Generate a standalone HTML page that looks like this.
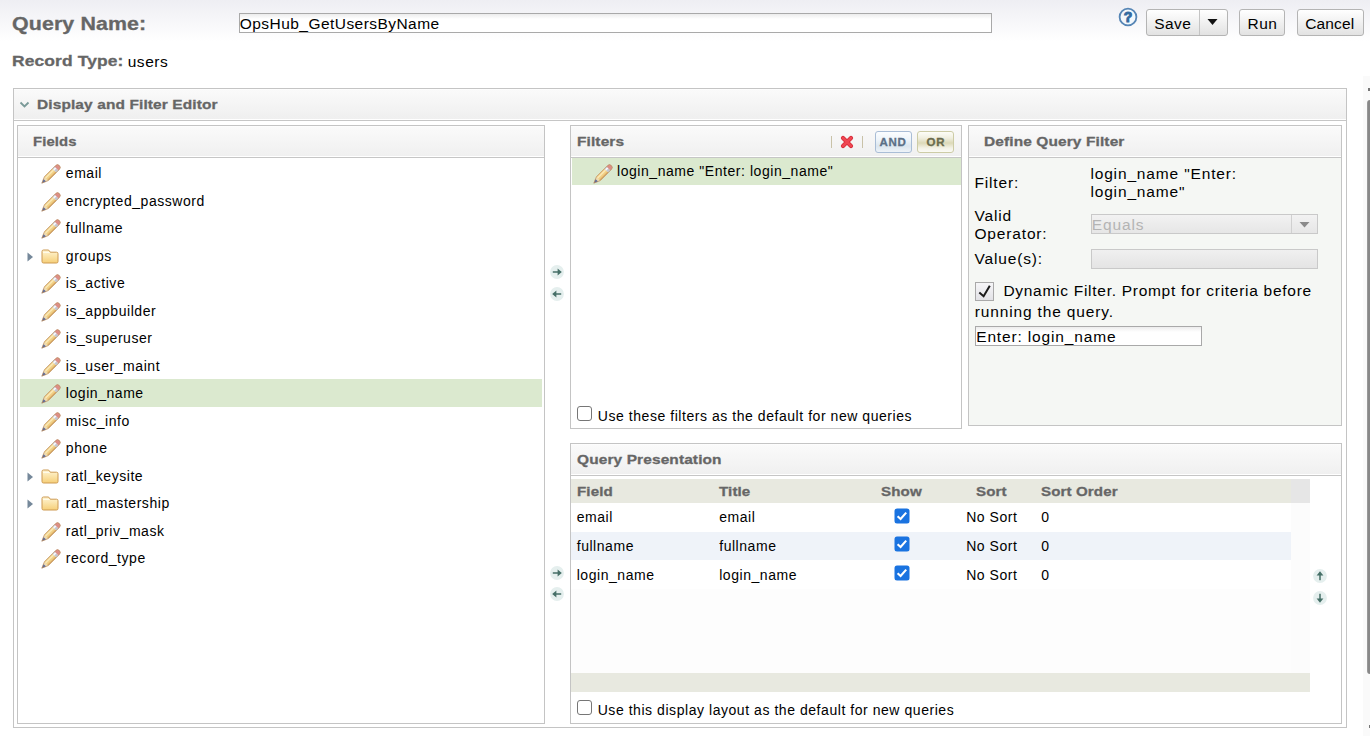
<!DOCTYPE html>
<html><head><meta charset="utf-8"><title>Query Editor</title>
<style>
html,body{margin:0;padding:0;width:1370px;height:736px;overflow:hidden;background:#fff;}
body{position:relative;font-family:"Liberation Sans",sans-serif;}
.t{position:absolute;white-space:nowrap;line-height:20px;font-family:"Liberation Sans",sans-serif;}
.b{position:absolute;display:block;}
</style></head><body>
<div class="b" style="left:0px;top:0px;width:1370px;height:41px;background:linear-gradient(#eeeef3,#ffffff);"></div>
<div class="t" style="left:12.00px;top:14.09px;font-size:18.5px;letter-spacing:0.1px;color:#666;font-weight:bold;-webkit-text-stroke:0.3px #666;transform:scaleX(1.155);transform-origin:0 0;">Query Name:</div>
<div class="b" style="left:239px;top:13px;width:753px;height:20px;border:1px solid #a9a9a9;box-sizing:border-box;background:linear-gradient(#ececec,#ffffff 5px);"></div>
<div class="t" style="left:239.80px;top:14.03px;font-size:15.5px;letter-spacing:0.45px;color:#000;">OpsHub_GetUsersByName</div>
<svg class="b" style="left:1118px;top:7px" width="20" height="20" viewBox="0 0 20 20"><circle cx="10" cy="10" r="8.4" fill="#f2f7fc" stroke="#5585b5" stroke-width="1.8"/><text x="10" y="15" text-anchor="middle" font-family="Liberation Sans" font-weight="bold" font-size="14" fill="#346aa0" stroke="#346aa0" stroke-width="1">?</text></svg>
<div class="b" style="left:1146px;top:9px;width:82px;height:27px;border:1px solid #b4b4b4;box-sizing:border-box;border-radius:3px;background:linear-gradient(#ffffff,#e2e2e2);"></div>
<div class="b" style="left:1199px;top:10px;width:1px;height:25px;background:#c4c4c4;"></div>
<div class="t" style="left:1154.20px;top:14.03px;font-size:15.5px;letter-spacing:0.43px;color:#000;">Save</div>
<svg class="b" style="left:1207px;top:18px" width="11" height="8" viewBox="0 0 11 8"><path d="M0.5 1 H10.5 L5.5 7 Z" fill="#111"/></svg>
<div class="b" style="left:1239px;top:9px;width:46px;height:27px;border:1px solid #b4b4b4;box-sizing:border-box;border-radius:3px;background:linear-gradient(#ffffff,#e2e2e2);"></div>
<div class="t" style="left:1247.60px;top:14.03px;font-size:15.5px;letter-spacing:0.39px;color:#000;">Run</div>
<div class="b" style="left:1297px;top:9px;width:67px;height:27px;border:1px solid #b4b4b4;box-sizing:border-box;border-radius:3px;background:linear-gradient(#ffffff,#e2e2e2);"></div>
<div class="t" style="left:1305.20px;top:14.03px;font-size:15.5px;letter-spacing:0.14px;color:#000;">Cancel</div>
<div class="t" style="left:12.00px;top:51.33px;font-size:15.5px;letter-spacing:0.1px;color:#666;font-weight:bold;-webkit-text-stroke:0.3px #666;transform:scaleX(1.125);transform-origin:0 0;">Record Type:</div>
<div class="t" style="left:127.70px;top:51.63px;font-size:15.5px;letter-spacing:0.56px;color:#000;">users</div>
<div class="b" style="left:13px;top:88px;width:1334px;height:640px;border:1px solid #c4c4c4;box-sizing:border-box;"></div>
<div class="b" style="left:14px;top:89px;width:1332px;height:31px;background:linear-gradient(#ffffff 0px,#fafafa 1px,#efefef 30px,#ffffff 30px);"></div>
<div class="b" style="left:14px;top:120px;width:1332px;height:1px;background:#c6c6c6;"></div>
<svg class="b" style="left:19px;top:101px" width="11" height="8" viewBox="0 0 11 8"><path d="M1.5 1.5 L5.5 5.5 L9.5 1.5" stroke="#7a9a98" stroke-width="1.8" fill="none"/></svg>
<div class="t" style="left:36.90px;top:94.92px;font-size:13.5px;letter-spacing:0.1px;color:#666;font-weight:bold;-webkit-text-stroke:0.3px #666;transform:scaleX(1.145);transform-origin:0 0;">Display and Filter Editor</div>
<div class="b" style="left:17px;top:125px;width:528px;height:599px;border:1px solid #c4c4c4;box-sizing:border-box;"></div>
<div class="b" style="left:18px;top:126px;width:526px;height:31px;background:linear-gradient(#ffffff 0px,#fafafa 1px,#f0f0f0 30px,#ffffff 30px);"></div>
<div class="b" style="left:18px;top:157px;width:526px;height:1px;background:#c6c6c6;"></div>
<div class="t" style="left:32.50px;top:131.82px;font-size:13.5px;letter-spacing:0.1px;color:#666;font-weight:bold;-webkit-text-stroke:0.3px #666;transform:scaleX(1.1);transform-origin:0 0;">Fields</div>
<svg class="b" style="left:40px;top:164px;overflow:visible" width="20" height="20" viewBox="0 0 20 20"><g transform="rotate(-45 10.5 10.5)"><path d="M-1.8 10.5 L4.6 7.8 H16 V13.2 H4.6 Z" fill="#eedcb2"/><path d="M-1.9 10.5 L2.4 8.7 V12.3 Z" fill="#5a6b9e"/><rect x="4.6" y="7.8" width="11.4" height="5.4" fill="#f1cf84"/><rect x="4.6" y="8.7" width="11.4" height="1.5" fill="#fae8b6"/><rect x="4.6" y="12" width="11.4" height="1.2" fill="#d9a862"/><rect x="16" y="7.8" width="3" height="5.4" fill="#c3c7d1"/><rect x="16" y="8.6" width="3" height="1.8" fill="#f7f8fc"/><path d="M19 7.8 H20.6 Q23.1 7.8 23.1 10.5 Q23.1 13.2 20.6 13.2 H19 Z" fill="#dc8e86"/><path d="M-1.8 10.5 L4.6 7.8 H20.6 Q23.1 7.8 23.1 10.5 Q23.1 13.2 20.6 13.2 H4.6 Z" fill="none" stroke="#b98b5c" stroke-width="0.75" stroke-opacity="0.9" stroke-linejoin="round"/></g></svg>
<div class="t" style="left:65.80px;top:163.05px;font-size:14px;letter-spacing:0.55px;color:#000;">email</div>
<svg class="b" style="left:40px;top:192px;overflow:visible" width="20" height="20" viewBox="0 0 20 20"><g transform="rotate(-45 10.5 10.5)"><path d="M-1.8 10.5 L4.6 7.8 H16 V13.2 H4.6 Z" fill="#eedcb2"/><path d="M-1.9 10.5 L2.4 8.7 V12.3 Z" fill="#5a6b9e"/><rect x="4.6" y="7.8" width="11.4" height="5.4" fill="#f1cf84"/><rect x="4.6" y="8.7" width="11.4" height="1.5" fill="#fae8b6"/><rect x="4.6" y="12" width="11.4" height="1.2" fill="#d9a862"/><rect x="16" y="7.8" width="3" height="5.4" fill="#c3c7d1"/><rect x="16" y="8.6" width="3" height="1.8" fill="#f7f8fc"/><path d="M19 7.8 H20.6 Q23.1 7.8 23.1 10.5 Q23.1 13.2 20.6 13.2 H19 Z" fill="#dc8e86"/><path d="M-1.8 10.5 L4.6 7.8 H20.6 Q23.1 7.8 23.1 10.5 Q23.1 13.2 20.6 13.2 H4.6 Z" fill="none" stroke="#b98b5c" stroke-width="0.75" stroke-opacity="0.9" stroke-linejoin="round"/></g></svg>
<div class="t" style="left:65.80px;top:190.55px;font-size:14px;letter-spacing:0.55px;color:#000;">encrypted_password</div>
<svg class="b" style="left:40px;top:219px;overflow:visible" width="20" height="20" viewBox="0 0 20 20"><g transform="rotate(-45 10.5 10.5)"><path d="M-1.8 10.5 L4.6 7.8 H16 V13.2 H4.6 Z" fill="#eedcb2"/><path d="M-1.9 10.5 L2.4 8.7 V12.3 Z" fill="#5a6b9e"/><rect x="4.6" y="7.8" width="11.4" height="5.4" fill="#f1cf84"/><rect x="4.6" y="8.7" width="11.4" height="1.5" fill="#fae8b6"/><rect x="4.6" y="12" width="11.4" height="1.2" fill="#d9a862"/><rect x="16" y="7.8" width="3" height="5.4" fill="#c3c7d1"/><rect x="16" y="8.6" width="3" height="1.8" fill="#f7f8fc"/><path d="M19 7.8 H20.6 Q23.1 7.8 23.1 10.5 Q23.1 13.2 20.6 13.2 H19 Z" fill="#dc8e86"/><path d="M-1.8 10.5 L4.6 7.8 H20.6 Q23.1 7.8 23.1 10.5 Q23.1 13.2 20.6 13.2 H4.6 Z" fill="none" stroke="#b98b5c" stroke-width="0.75" stroke-opacity="0.9" stroke-linejoin="round"/></g></svg>
<div class="t" style="left:65.80px;top:218.05px;font-size:14px;letter-spacing:0.55px;color:#000;">fullname</div>
<svg class="b" style="left:27px;top:252px" width="7" height="10" viewBox="0 0 7 10"><path d="M0.5 0.5 L6 5 L0.5 9.5 Z" fill="#75889a"/></svg>
<svg class="b" style="left:41px;top:249px" width="18" height="15" viewBox="0 0 18 15"><defs><linearGradient id="fg" x1="0" y1="0" x2="0" y2="1"><stop offset="0" stop-color="#fff6d6"/><stop offset="1" stop-color="#f6cf78"/></linearGradient></defs><path d="M1 2.5 Q1 1 2.5 1 H7 Q8 1 8.5 2 L9.2 3.2 H15.5 Q17 3.2 17 4.7 V12.5 Q17 14 15.5 14 H2.5 Q1 14 1 12.5 Z" fill="url(#fg)" stroke="#cd9a52" stroke-width="1"/><path d="M2 3.5 H8.6" stroke="#fffbea" stroke-width="1"/></svg>
<div class="t" style="left:65.80px;top:245.55px;font-size:14px;letter-spacing:0.55px;color:#000;">groups</div>
<svg class="b" style="left:40px;top:274px;overflow:visible" width="20" height="20" viewBox="0 0 20 20"><g transform="rotate(-45 10.5 10.5)"><path d="M-1.8 10.5 L4.6 7.8 H16 V13.2 H4.6 Z" fill="#eedcb2"/><path d="M-1.9 10.5 L2.4 8.7 V12.3 Z" fill="#5a6b9e"/><rect x="4.6" y="7.8" width="11.4" height="5.4" fill="#f1cf84"/><rect x="4.6" y="8.7" width="11.4" height="1.5" fill="#fae8b6"/><rect x="4.6" y="12" width="11.4" height="1.2" fill="#d9a862"/><rect x="16" y="7.8" width="3" height="5.4" fill="#c3c7d1"/><rect x="16" y="8.6" width="3" height="1.8" fill="#f7f8fc"/><path d="M19 7.8 H20.6 Q23.1 7.8 23.1 10.5 Q23.1 13.2 20.6 13.2 H19 Z" fill="#dc8e86"/><path d="M-1.8 10.5 L4.6 7.8 H20.6 Q23.1 7.8 23.1 10.5 Q23.1 13.2 20.6 13.2 H4.6 Z" fill="none" stroke="#b98b5c" stroke-width="0.75" stroke-opacity="0.9" stroke-linejoin="round"/></g></svg>
<div class="t" style="left:65.80px;top:273.05px;font-size:14px;letter-spacing:0.55px;color:#000;">is_active</div>
<svg class="b" style="left:40px;top:302px;overflow:visible" width="20" height="20" viewBox="0 0 20 20"><g transform="rotate(-45 10.5 10.5)"><path d="M-1.8 10.5 L4.6 7.8 H16 V13.2 H4.6 Z" fill="#eedcb2"/><path d="M-1.9 10.5 L2.4 8.7 V12.3 Z" fill="#5a6b9e"/><rect x="4.6" y="7.8" width="11.4" height="5.4" fill="#f1cf84"/><rect x="4.6" y="8.7" width="11.4" height="1.5" fill="#fae8b6"/><rect x="4.6" y="12" width="11.4" height="1.2" fill="#d9a862"/><rect x="16" y="7.8" width="3" height="5.4" fill="#c3c7d1"/><rect x="16" y="8.6" width="3" height="1.8" fill="#f7f8fc"/><path d="M19 7.8 H20.6 Q23.1 7.8 23.1 10.5 Q23.1 13.2 20.6 13.2 H19 Z" fill="#dc8e86"/><path d="M-1.8 10.5 L4.6 7.8 H20.6 Q23.1 7.8 23.1 10.5 Q23.1 13.2 20.6 13.2 H4.6 Z" fill="none" stroke="#b98b5c" stroke-width="0.75" stroke-opacity="0.9" stroke-linejoin="round"/></g></svg>
<div class="t" style="left:65.80px;top:300.55px;font-size:14px;letter-spacing:0.55px;color:#000;">is_appbuilder</div>
<svg class="b" style="left:40px;top:329px;overflow:visible" width="20" height="20" viewBox="0 0 20 20"><g transform="rotate(-45 10.5 10.5)"><path d="M-1.8 10.5 L4.6 7.8 H16 V13.2 H4.6 Z" fill="#eedcb2"/><path d="M-1.9 10.5 L2.4 8.7 V12.3 Z" fill="#5a6b9e"/><rect x="4.6" y="7.8" width="11.4" height="5.4" fill="#f1cf84"/><rect x="4.6" y="8.7" width="11.4" height="1.5" fill="#fae8b6"/><rect x="4.6" y="12" width="11.4" height="1.2" fill="#d9a862"/><rect x="16" y="7.8" width="3" height="5.4" fill="#c3c7d1"/><rect x="16" y="8.6" width="3" height="1.8" fill="#f7f8fc"/><path d="M19 7.8 H20.6 Q23.1 7.8 23.1 10.5 Q23.1 13.2 20.6 13.2 H19 Z" fill="#dc8e86"/><path d="M-1.8 10.5 L4.6 7.8 H20.6 Q23.1 7.8 23.1 10.5 Q23.1 13.2 20.6 13.2 H4.6 Z" fill="none" stroke="#b98b5c" stroke-width="0.75" stroke-opacity="0.9" stroke-linejoin="round"/></g></svg>
<div class="t" style="left:65.80px;top:328.05px;font-size:14px;letter-spacing:0.55px;color:#000;">is_superuser</div>
<svg class="b" style="left:40px;top:357px;overflow:visible" width="20" height="20" viewBox="0 0 20 20"><g transform="rotate(-45 10.5 10.5)"><path d="M-1.8 10.5 L4.6 7.8 H16 V13.2 H4.6 Z" fill="#eedcb2"/><path d="M-1.9 10.5 L2.4 8.7 V12.3 Z" fill="#5a6b9e"/><rect x="4.6" y="7.8" width="11.4" height="5.4" fill="#f1cf84"/><rect x="4.6" y="8.7" width="11.4" height="1.5" fill="#fae8b6"/><rect x="4.6" y="12" width="11.4" height="1.2" fill="#d9a862"/><rect x="16" y="7.8" width="3" height="5.4" fill="#c3c7d1"/><rect x="16" y="8.6" width="3" height="1.8" fill="#f7f8fc"/><path d="M19 7.8 H20.6 Q23.1 7.8 23.1 10.5 Q23.1 13.2 20.6 13.2 H19 Z" fill="#dc8e86"/><path d="M-1.8 10.5 L4.6 7.8 H20.6 Q23.1 7.8 23.1 10.5 Q23.1 13.2 20.6 13.2 H4.6 Z" fill="none" stroke="#b98b5c" stroke-width="0.75" stroke-opacity="0.9" stroke-linejoin="round"/></g></svg>
<div class="t" style="left:65.80px;top:355.55px;font-size:14px;letter-spacing:0.55px;color:#000;">is_user_maint</div>
<div class="b" style="left:20px;top:379px;width:522px;height:28px;background:#dbe9cf;"></div>
<svg class="b" style="left:40px;top:384px;overflow:visible" width="20" height="20" viewBox="0 0 20 20"><g transform="rotate(-45 10.5 10.5)"><path d="M-1.8 10.5 L4.6 7.8 H16 V13.2 H4.6 Z" fill="#eedcb2"/><path d="M-1.9 10.5 L2.4 8.7 V12.3 Z" fill="#5a6b9e"/><rect x="4.6" y="7.8" width="11.4" height="5.4" fill="#f1cf84"/><rect x="4.6" y="8.7" width="11.4" height="1.5" fill="#fae8b6"/><rect x="4.6" y="12" width="11.4" height="1.2" fill="#d9a862"/><rect x="16" y="7.8" width="3" height="5.4" fill="#c3c7d1"/><rect x="16" y="8.6" width="3" height="1.8" fill="#f7f8fc"/><path d="M19 7.8 H20.6 Q23.1 7.8 23.1 10.5 Q23.1 13.2 20.6 13.2 H19 Z" fill="#dc8e86"/><path d="M-1.8 10.5 L4.6 7.8 H20.6 Q23.1 7.8 23.1 10.5 Q23.1 13.2 20.6 13.2 H4.6 Z" fill="none" stroke="#b98b5c" stroke-width="0.75" stroke-opacity="0.9" stroke-linejoin="round"/></g></svg>
<div class="t" style="left:65.80px;top:383.05px;font-size:14px;letter-spacing:0.55px;color:#000;">login_name</div>
<svg class="b" style="left:40px;top:412px;overflow:visible" width="20" height="20" viewBox="0 0 20 20"><g transform="rotate(-45 10.5 10.5)"><path d="M-1.8 10.5 L4.6 7.8 H16 V13.2 H4.6 Z" fill="#eedcb2"/><path d="M-1.9 10.5 L2.4 8.7 V12.3 Z" fill="#5a6b9e"/><rect x="4.6" y="7.8" width="11.4" height="5.4" fill="#f1cf84"/><rect x="4.6" y="8.7" width="11.4" height="1.5" fill="#fae8b6"/><rect x="4.6" y="12" width="11.4" height="1.2" fill="#d9a862"/><rect x="16" y="7.8" width="3" height="5.4" fill="#c3c7d1"/><rect x="16" y="8.6" width="3" height="1.8" fill="#f7f8fc"/><path d="M19 7.8 H20.6 Q23.1 7.8 23.1 10.5 Q23.1 13.2 20.6 13.2 H19 Z" fill="#dc8e86"/><path d="M-1.8 10.5 L4.6 7.8 H20.6 Q23.1 7.8 23.1 10.5 Q23.1 13.2 20.6 13.2 H4.6 Z" fill="none" stroke="#b98b5c" stroke-width="0.75" stroke-opacity="0.9" stroke-linejoin="round"/></g></svg>
<div class="t" style="left:65.80px;top:410.55px;font-size:14px;letter-spacing:0.55px;color:#000;">misc_info</div>
<svg class="b" style="left:40px;top:439px;overflow:visible" width="20" height="20" viewBox="0 0 20 20"><g transform="rotate(-45 10.5 10.5)"><path d="M-1.8 10.5 L4.6 7.8 H16 V13.2 H4.6 Z" fill="#eedcb2"/><path d="M-1.9 10.5 L2.4 8.7 V12.3 Z" fill="#5a6b9e"/><rect x="4.6" y="7.8" width="11.4" height="5.4" fill="#f1cf84"/><rect x="4.6" y="8.7" width="11.4" height="1.5" fill="#fae8b6"/><rect x="4.6" y="12" width="11.4" height="1.2" fill="#d9a862"/><rect x="16" y="7.8" width="3" height="5.4" fill="#c3c7d1"/><rect x="16" y="8.6" width="3" height="1.8" fill="#f7f8fc"/><path d="M19 7.8 H20.6 Q23.1 7.8 23.1 10.5 Q23.1 13.2 20.6 13.2 H19 Z" fill="#dc8e86"/><path d="M-1.8 10.5 L4.6 7.8 H20.6 Q23.1 7.8 23.1 10.5 Q23.1 13.2 20.6 13.2 H4.6 Z" fill="none" stroke="#b98b5c" stroke-width="0.75" stroke-opacity="0.9" stroke-linejoin="round"/></g></svg>
<div class="t" style="left:65.80px;top:438.05px;font-size:14px;letter-spacing:0.55px;color:#000;">phone</div>
<svg class="b" style="left:27px;top:472px" width="7" height="10" viewBox="0 0 7 10"><path d="M0.5 0.5 L6 5 L0.5 9.5 Z" fill="#75889a"/></svg>
<svg class="b" style="left:41px;top:469px" width="18" height="15" viewBox="0 0 18 15"><defs><linearGradient id="fg" x1="0" y1="0" x2="0" y2="1"><stop offset="0" stop-color="#fff6d6"/><stop offset="1" stop-color="#f6cf78"/></linearGradient></defs><path d="M1 2.5 Q1 1 2.5 1 H7 Q8 1 8.5 2 L9.2 3.2 H15.5 Q17 3.2 17 4.7 V12.5 Q17 14 15.5 14 H2.5 Q1 14 1 12.5 Z" fill="url(#fg)" stroke="#cd9a52" stroke-width="1"/><path d="M2 3.5 H8.6" stroke="#fffbea" stroke-width="1"/></svg>
<div class="t" style="left:65.80px;top:465.55px;font-size:14px;letter-spacing:0.55px;color:#000;">ratl_keysite</div>
<svg class="b" style="left:27px;top:499px" width="7" height="10" viewBox="0 0 7 10"><path d="M0.5 0.5 L6 5 L0.5 9.5 Z" fill="#75889a"/></svg>
<svg class="b" style="left:41px;top:496px" width="18" height="15" viewBox="0 0 18 15"><defs><linearGradient id="fg" x1="0" y1="0" x2="0" y2="1"><stop offset="0" stop-color="#fff6d6"/><stop offset="1" stop-color="#f6cf78"/></linearGradient></defs><path d="M1 2.5 Q1 1 2.5 1 H7 Q8 1 8.5 2 L9.2 3.2 H15.5 Q17 3.2 17 4.7 V12.5 Q17 14 15.5 14 H2.5 Q1 14 1 12.5 Z" fill="url(#fg)" stroke="#cd9a52" stroke-width="1"/><path d="M2 3.5 H8.6" stroke="#fffbea" stroke-width="1"/></svg>
<div class="t" style="left:65.80px;top:493.05px;font-size:14px;letter-spacing:0.55px;color:#000;">ratl_mastership</div>
<svg class="b" style="left:40px;top:522px;overflow:visible" width="20" height="20" viewBox="0 0 20 20"><g transform="rotate(-45 10.5 10.5)"><path d="M-1.8 10.5 L4.6 7.8 H16 V13.2 H4.6 Z" fill="#eedcb2"/><path d="M-1.9 10.5 L2.4 8.7 V12.3 Z" fill="#5a6b9e"/><rect x="4.6" y="7.8" width="11.4" height="5.4" fill="#f1cf84"/><rect x="4.6" y="8.7" width="11.4" height="1.5" fill="#fae8b6"/><rect x="4.6" y="12" width="11.4" height="1.2" fill="#d9a862"/><rect x="16" y="7.8" width="3" height="5.4" fill="#c3c7d1"/><rect x="16" y="8.6" width="3" height="1.8" fill="#f7f8fc"/><path d="M19 7.8 H20.6 Q23.1 7.8 23.1 10.5 Q23.1 13.2 20.6 13.2 H19 Z" fill="#dc8e86"/><path d="M-1.8 10.5 L4.6 7.8 H20.6 Q23.1 7.8 23.1 10.5 Q23.1 13.2 20.6 13.2 H4.6 Z" fill="none" stroke="#b98b5c" stroke-width="0.75" stroke-opacity="0.9" stroke-linejoin="round"/></g></svg>
<div class="t" style="left:65.80px;top:520.55px;font-size:14px;letter-spacing:0.55px;color:#000;">ratl_priv_mask</div>
<svg class="b" style="left:40px;top:549px;overflow:visible" width="20" height="20" viewBox="0 0 20 20"><g transform="rotate(-45 10.5 10.5)"><path d="M-1.8 10.5 L4.6 7.8 H16 V13.2 H4.6 Z" fill="#eedcb2"/><path d="M-1.9 10.5 L2.4 8.7 V12.3 Z" fill="#5a6b9e"/><rect x="4.6" y="7.8" width="11.4" height="5.4" fill="#f1cf84"/><rect x="4.6" y="8.7" width="11.4" height="1.5" fill="#fae8b6"/><rect x="4.6" y="12" width="11.4" height="1.2" fill="#d9a862"/><rect x="16" y="7.8" width="3" height="5.4" fill="#c3c7d1"/><rect x="16" y="8.6" width="3" height="1.8" fill="#f7f8fc"/><path d="M19 7.8 H20.6 Q23.1 7.8 23.1 10.5 Q23.1 13.2 20.6 13.2 H19 Z" fill="#dc8e86"/><path d="M-1.8 10.5 L4.6 7.8 H20.6 Q23.1 7.8 23.1 10.5 Q23.1 13.2 20.6 13.2 H4.6 Z" fill="none" stroke="#b98b5c" stroke-width="0.75" stroke-opacity="0.9" stroke-linejoin="round"/></g></svg>
<div class="t" style="left:65.80px;top:548.05px;font-size:14px;letter-spacing:0.55px;color:#000;">record_type</div>
<svg class="b" style="left:550px;top:265px" width="14" height="14" viewBox="0 0 14 14"><circle cx="7" cy="7" r="6.9" fill="#e5efee"/><g transform="rotate(0 7 7)"><rect x="2.8" y="6.25" width="5.6" height="1.5" fill="#456f67"/><path d="M7.6 3.6 L11.8 7 L7.6 10.4 Z" fill="#456f67"/></g></svg>
<svg class="b" style="left:550px;top:287px" width="14" height="14" viewBox="0 0 14 14"><circle cx="7" cy="7" r="6.9" fill="#e5efee"/><g transform="rotate(180 7 7)"><rect x="2.8" y="6.25" width="5.6" height="1.5" fill="#456f67"/><path d="M7.6 3.6 L11.8 7 L7.6 10.4 Z" fill="#456f67"/></g></svg>
<svg class="b" style="left:550px;top:566px" width="14" height="14" viewBox="0 0 14 14"><circle cx="7" cy="7" r="6.9" fill="#e5efee"/><g transform="rotate(0 7 7)"><rect x="2.8" y="6.25" width="5.6" height="1.5" fill="#456f67"/><path d="M7.6 3.6 L11.8 7 L7.6 10.4 Z" fill="#456f67"/></g></svg>
<svg class="b" style="left:550px;top:587px" width="14" height="14" viewBox="0 0 14 14"><circle cx="7" cy="7" r="6.9" fill="#e5efee"/><g transform="rotate(180 7 7)"><rect x="2.8" y="6.25" width="5.6" height="1.5" fill="#456f67"/><path d="M7.6 3.6 L11.8 7 L7.6 10.4 Z" fill="#456f67"/></g></svg>
<div class="b" style="left:570px;top:125px;width:392px;height:304px;border:1px solid #c4c4c4;box-sizing:border-box;"></div>
<div class="b" style="left:571px;top:126px;width:390px;height:31px;background:linear-gradient(#ffffff 0px,#fafafa 1px,#f0f0f0 30px,#ffffff 30px);"></div>
<div class="b" style="left:571px;top:157px;width:390px;height:1px;background:#c6c6c6;"></div>
<div class="t" style="left:576.90px;top:131.82px;font-size:13.5px;letter-spacing:0.1px;color:#666;font-weight:bold;-webkit-text-stroke:0.3px #666;transform:scaleX(1.145);transform-origin:0 0;">Filters</div>
<div class="b" style="left:831px;top:136px;width:1px;height:12px;background:#c9c2a8;"></div>
<div class="b" style="left:862px;top:136px;width:1px;height:12px;background:#c9c2a8;"></div>
<svg class="b" style="left:840px;top:135px" width="14" height="14" viewBox="0 0 14 14"><path d="M3 3 L11 11 M11 3 L3 11" stroke="#d42a36" stroke-width="4.2" stroke-linecap="round"/><path d="M3 3 L11 11 M11 3 L3 11" stroke="#ef4652" stroke-width="2.6" stroke-linecap="round"/></svg>
<div class="b" style="left:875px;top:131px;width:37px;height:22px;border:1px solid #a9bdd6;box-sizing:border-box;border-radius:3px;background:linear-gradient(#fbfdff,#eef4f9 40%,#dbe6ef 70%,#eef3f8);"></div>
<div class="t" style="left:879.50px;top:132.32px;font-size:11.5px;letter-spacing:0.7px;color:#5b6f86;font-weight:bold;-webkit-text-stroke:0.3px #5b6f86;">AND</div>
<div class="b" style="left:917px;top:131px;width:37px;height:22px;border:1px solid #cdcca6;box-sizing:border-box;border-radius:3px;background:linear-gradient(#fdfdf8,#f0efe0 30%,#dcd9b8 55%,#f3f2e6 80%,#fbfbf6);"></div>
<div class="t" style="left:926.40px;top:132.32px;font-size:11.5px;letter-spacing:1.0px;color:#6a6b4c;font-weight:bold;-webkit-text-stroke:0.3px #6a6b4c;">OR</div>
<div class="b" style="left:572px;top:158px;width:389px;height:27px;background:#dbe9cf;"></div>
<svg class="b" style="left:592px;top:164px;overflow:visible" width="20" height="20" viewBox="0 0 20 20"><g transform="rotate(-45 10.5 10.5)"><path d="M-1.8 10.5 L4.6 7.8 H16 V13.2 H4.6 Z" fill="#eedcb2"/><path d="M-1.9 10.5 L2.4 8.7 V12.3 Z" fill="#5a6b9e"/><rect x="4.6" y="7.8" width="11.4" height="5.4" fill="#f1cf84"/><rect x="4.6" y="8.7" width="11.4" height="1.5" fill="#fae8b6"/><rect x="4.6" y="12" width="11.4" height="1.2" fill="#d9a862"/><rect x="16" y="7.8" width="3" height="5.4" fill="#c3c7d1"/><rect x="16" y="8.6" width="3" height="1.8" fill="#f7f8fc"/><path d="M19 7.8 H20.6 Q23.1 7.8 23.1 10.5 Q23.1 13.2 20.6 13.2 H19 Z" fill="#dc8e86"/><path d="M-1.8 10.5 L4.6 7.8 H20.6 Q23.1 7.8 23.1 10.5 Q23.1 13.2 20.6 13.2 H4.6 Z" fill="none" stroke="#b98b5c" stroke-width="0.75" stroke-opacity="0.9" stroke-linejoin="round"/></g></svg>
<div class="t" style="left:617.00px;top:161.35px;font-size:14px;letter-spacing:0.55px;color:#000;">login_name "Enter: login_name"</div>
<div class="b" style="left:577px;top:406px;width:15px;height:15px;border:1.3px solid #767676;box-sizing:border-box;border-radius:3px;background:#fff;"></div>
<div class="t" style="left:597.80px;top:405.75px;font-size:14px;letter-spacing:0.55px;color:#000;">Use these filters as the default for new queries</div>
<div class="b" style="left:968px;top:125px;width:374px;height:301px;border:1px solid #c4c4c4;box-sizing:border-box;"></div>
<div class="b" style="left:969px;top:158px;width:372px;height:267px;background:#f5f7f4;"></div>
<div class="b" style="left:969px;top:126px;width:372px;height:31px;background:linear-gradient(#ffffff 0px,#fafafa 1px,#f0f0f0 30px,#ffffff 30px);"></div>
<div class="b" style="left:969px;top:157px;width:372px;height:1px;background:#c6c6c6;"></div>
<div class="t" style="left:983.50px;top:131.82px;font-size:13.5px;letter-spacing:0.1px;color:#666;font-weight:bold;-webkit-text-stroke:0.3px #666;transform:scaleX(1.145);transform-origin:0 0;">Define Query Filter</div>
<div class="t" style="left:974.40px;top:172.63px;font-size:15.5px;letter-spacing:0.85px;color:#000;">Filter:</div>
<div class="t" style="left:1090.40px;top:163.63px;font-size:15.5px;letter-spacing:0.85px;color:#000;">login_name "Enter:</div>
<div class="t" style="left:1090.40px;top:181.63px;font-size:15.5px;letter-spacing:0.85px;color:#000;">login_name"</div>
<div class="t" style="left:974.40px;top:205.53px;font-size:15.5px;letter-spacing:0.85px;color:#000;">Valid</div>
<div class="t" style="left:974.40px;top:223.63px;font-size:15.5px;letter-spacing:0.85px;color:#000;">Operator:</div>
<div class="b" style="left:1091px;top:214px;width:227px;height:20px;border:1px solid #c9c9c9;box-sizing:border-box;background:linear-gradient(#f2f2f2,#e6e6e6);"></div>
<div class="b" style="left:1291px;top:215px;width:1px;height:18px;background:#d0d0d0;"></div>
<svg class="b" style="left:1299px;top:221px" width="11" height="8" viewBox="0 0 11 8"><path d="M0.5 1 H10.5 L5.5 6.5 Z" fill="#8a8a8a"/></svg>
<div class="t" style="left:1091.80px;top:214.63px;font-size:15.5px;letter-spacing:0.85px;color:#b4b4b4;">Equals</div>
<div class="t" style="left:974.40px;top:248.63px;font-size:15.5px;letter-spacing:0.85px;color:#000;">Value(s):</div>
<div class="b" style="left:1091px;top:249px;width:227px;height:20px;border:1px solid #c9c9c9;box-sizing:border-box;background:linear-gradient(#f0f0f0,#e4e4e4);"></div>
<div class="b" style="left:975px;top:282px;width:19px;height:19px;border:1px solid #a9a9a9;box-sizing:border-box;background:linear-gradient(#f6f6f8,#e2e2e6);"></div>
<svg class="b" style="left:975px;top:282px" width="19" height="19" viewBox="0 0 19 19"><path d="M4.3 10.6 L8.6 14.2 L14.8 3.8" stroke="#1a1a1a" stroke-width="2" fill="none"/></svg>
<div class="t" style="left:1003.40px;top:280.63px;font-size:15.5px;letter-spacing:0.72px;color:#000;">Dynamic Filter. Prompt for criteria before</div>
<div class="t" style="left:974.80px;top:302.03px;font-size:15.5px;letter-spacing:0.85px;color:#000;">running the query.</div>
<div class="b" style="left:975px;top:326px;width:227px;height:20px;border:1px solid #a9a9a9;box-sizing:border-box;background:linear-gradient(#ececec,#ffffff 5px);"></div>
<div class="t" style="left:976.20px;top:326.63px;font-size:15.5px;letter-spacing:0.85px;color:#000;">Enter: login_name</div>
<div class="b" style="left:570px;top:443px;width:772px;height:281px;border:1px solid #c4c4c4;box-sizing:border-box;"></div>
<div class="b" style="left:571px;top:444px;width:770px;height:31px;background:linear-gradient(#ffffff 0px,#fafafa 1px,#f0f0f0 30px,#ffffff 30px);"></div>
<div class="b" style="left:571px;top:475px;width:770px;height:1px;background:#c6c6c6;"></div>
<div class="t" style="left:576.70px;top:449.82px;font-size:13.5px;letter-spacing:0.1px;color:#666;font-weight:bold;-webkit-text-stroke:0.3px #666;transform:scaleX(1.145);transform-origin:0 0;">Query Presentation</div>
<div class="b" style="left:571px;top:479px;width:720px;height:24px;background:#e8e9e0;"></div>
<div class="b" style="left:1291px;top:479px;width:19px;height:24px;background:#e6e6e6;"></div>
<div class="b" style="left:1291px;top:503px;width:19px;height:170px;background:#fcfcfc;"></div>
<div class="b" style="left:571px;top:589px;width:720px;height:84px;background:#fdfdfd;"></div>
<div class="b" style="left:571px;top:532px;width:720px;height:28px;background:#eff3f9;"></div>
<div class="b" style="left:571px;top:673px;width:739px;height:19px;background:#e8e9e0;"></div>
<div class="t" style="left:576.70px;top:482.02px;font-size:13.5px;letter-spacing:0.1px;color:#666;font-weight:bold;-webkit-text-stroke:0.3px #666;transform:scaleX(1.12);transform-origin:0 0;">Field</div>
<div class="t" style="left:719.20px;top:482.02px;font-size:13.5px;letter-spacing:0.1px;color:#666;font-weight:bold;-webkit-text-stroke:0.3px #666;transform:scaleX(1.12);transform-origin:0 0;">Title</div>
<div class="t" style="left:881.20px;top:482.02px;font-size:13.5px;letter-spacing:0.1px;color:#666;font-weight:bold;-webkit-text-stroke:0.3px #666;transform:scaleX(1.12);transform-origin:0 0;">Show</div>
<div class="t" style="left:975.80px;top:482.02px;font-size:13.5px;letter-spacing:0.1px;color:#666;font-weight:bold;-webkit-text-stroke:0.3px #666;transform:scaleX(1.12);transform-origin:0 0;">Sort</div>
<div class="t" style="left:1040.80px;top:482.02px;font-size:13.5px;letter-spacing:0.1px;color:#666;font-weight:bold;-webkit-text-stroke:0.3px #666;transform:scaleX(1.12);transform-origin:0 0;">Sort Order</div>
<div class="t" style="left:576.70px;top:507.15px;font-size:14px;letter-spacing:0.55px;color:#000;">email</div>
<div class="t" style="left:719.20px;top:507.15px;font-size:14px;letter-spacing:0.55px;color:#000;">email</div>
<div class="t" style="left:966.20px;top:507.15px;font-size:14px;letter-spacing:0.55px;color:#000;">No Sort</div>
<div class="t" style="left:1041.20px;top:507.15px;font-size:14px;letter-spacing:0.55px;color:#000;">0</div>
<svg class="b" style="left:894px;top:508px" width="16" height="16" viewBox="0 0 16 16"><rect x="0.5" y="0.5" width="15" height="15" rx="2.5" fill="#1a73e0"/><path d="M3.6 8.2 L6.6 11 L12.2 4.6" stroke="#fff" stroke-width="2.1" fill="none"/></svg>
<div class="t" style="left:576.70px;top:535.85px;font-size:14px;letter-spacing:0.55px;color:#000;">fullname</div>
<div class="t" style="left:719.20px;top:535.85px;font-size:14px;letter-spacing:0.55px;color:#000;">fullname</div>
<div class="t" style="left:966.20px;top:535.85px;font-size:14px;letter-spacing:0.55px;color:#000;">No Sort</div>
<div class="t" style="left:1041.20px;top:535.85px;font-size:14px;letter-spacing:0.55px;color:#000;">0</div>
<svg class="b" style="left:894px;top:536px" width="16" height="16" viewBox="0 0 16 16"><rect x="0.5" y="0.5" width="15" height="15" rx="2.5" fill="#1a73e0"/><path d="M3.6 8.2 L6.6 11 L12.2 4.6" stroke="#fff" stroke-width="2.1" fill="none"/></svg>
<div class="t" style="left:576.70px;top:564.55px;font-size:14px;letter-spacing:0.55px;color:#000;">login_name</div>
<div class="t" style="left:719.20px;top:564.55px;font-size:14px;letter-spacing:0.55px;color:#000;">login_name</div>
<div class="t" style="left:966.20px;top:564.55px;font-size:14px;letter-spacing:0.55px;color:#000;">No Sort</div>
<div class="t" style="left:1041.20px;top:564.55px;font-size:14px;letter-spacing:0.55px;color:#000;">0</div>
<svg class="b" style="left:894px;top:565px" width="16" height="16" viewBox="0 0 16 16"><rect x="0.5" y="0.5" width="15" height="15" rx="2.5" fill="#1a73e0"/><path d="M3.6 8.2 L6.6 11 L12.2 4.6" stroke="#fff" stroke-width="2.1" fill="none"/></svg>
<svg class="b" style="left:1312.5px;top:568.6px" width="14" height="14" viewBox="0 0 14 14"><circle cx="7" cy="7" r="6.9" fill="#e5efee"/><g transform="rotate(270 7 7)"><rect x="2.8" y="6.25" width="5.6" height="1.5" fill="#456f67"/><path d="M7.6 3.6 L11.8 7 L7.6 10.4 Z" fill="#456f67"/></g></svg>
<svg class="b" style="left:1312.5px;top:590.5px" width="14" height="14" viewBox="0 0 14 14"><circle cx="7" cy="7" r="6.9" fill="#e5efee"/><g transform="rotate(90 7 7)"><rect x="2.8" y="6.25" width="5.6" height="1.5" fill="#456f67"/><path d="M7.6 3.6 L11.8 7 L7.6 10.4 Z" fill="#456f67"/></g></svg>
<div class="b" style="left:577px;top:700px;width:15px;height:15px;border:1.3px solid #767676;box-sizing:border-box;border-radius:3px;background:#fff;"></div>
<div class="t" style="left:597.70px;top:699.65px;font-size:14px;letter-spacing:0.55px;color:#000;">Use this display layout as the default for new queries</div>
<div class="b" style="left:1363px;top:76px;width:7px;height:660px;background:#fafafa;"></div>
<div class="b" style="left:1367px;top:100px;width:3px;height:574px;background:linear-gradient(90deg,#a8a8a8 0px,#888 1px);border-radius:3px 0 0 3px;"></div>
<div class="b" style="left:1368px;top:88px;width:2px;height:3px;background:#777;"></div>
<div class="b" style="left:1369px;top:725px;width:1px;height:3px;background:#777;"></div>
</body></html>
